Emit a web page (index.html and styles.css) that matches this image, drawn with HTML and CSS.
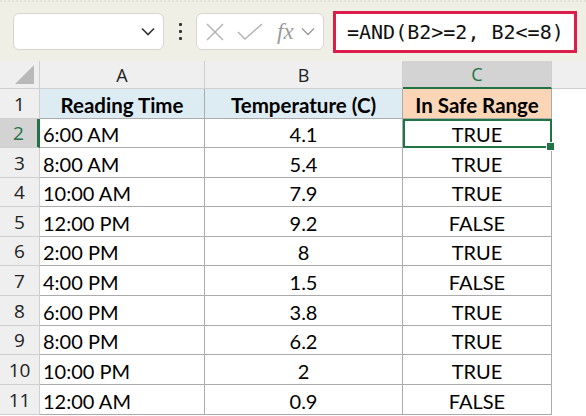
FILE: index.html
```html
<!DOCTYPE html>
<html lang="en">
<head>
	<meta charset="UTF-8">
	<title>AND formula</title>
	<link rel="stylesheet" href="styles.css">
</head>
<body>

	<!-- Formula bar -->
	<div class="toolbar">
		<div class="namebox">
			<svg class="chev" width="14" height="9" viewBox="0 0 14 9"><path d="M1 1.5 L7 7.5 L13 1.5" fill="none" stroke="#333" stroke-width="1.6"/></svg>
		</div>
		<div class="dots"><span></span><span></span><span></span></div>
		<div class="fxbox">
			<svg width="20" height="20" viewBox="0 0 20 20"><path d="M2 2 L18 18 M18 2 L2 18" stroke="#b4b4b4" stroke-width="1.5" fill="none"/></svg>
			<svg width="26" height="20" viewBox="0 0 26 20"><path d="M1 10 L8 17 L25 2" stroke="#b4b4b4" stroke-width="1.5" fill="none"/></svg>
			<span class="fx">fx</span>
			<svg width="14" height="9" viewBox="0 0 14 9"><path d="M1 1.5 L7 7.5 L13 1.5" fill="none" stroke="#9a9a9a" stroke-width="1.4"/></svg>
		</div>
		<div class="formula">=AND(B2&gt;=2, B2&lt;=8)</div>
	</div>

	<!-- Sheet -->
	<div class="sheet">
		<div class="corner"><div class="tri"></div></div>
		<div class="colhead">A</div>
		<div class="colhead">B</div>
		<div class="colhead sel">C</div>
		<div class="colhead rest"></div>

		<div class="rowhead">1</div>
		<div class="cell hdr blue">Reading Time</div>
		<div class="cell hdr blue">Temperature (C)</div>
		<div class="cell hdr peach">In Safe Range</div>
		<div class="blank"></div>

		<div class="rowhead sel">2</div>
		<div class="cell left">6:00 AM</div>
		<div class="cell">4.1</div>
		<div class="cell active">TRUE<span class="handle"></span></div>
		<div class="blank"></div>

		<div class="rowhead">3</div>
		<div class="cell left">8:00 AM</div>
		<div class="cell">5.4</div>
		<div class="cell">TRUE</div>
		<div class="blank"></div>

		<div class="rowhead">4</div>
		<div class="cell left">10:00 AM</div>
		<div class="cell">7.9</div>
		<div class="cell">TRUE</div>
		<div class="blank"></div>

		<div class="rowhead">5</div>
		<div class="cell left">12:00 PM</div>
		<div class="cell">9.2</div>
		<div class="cell">FALSE</div>
		<div class="blank"></div>

		<div class="rowhead">6</div>
		<div class="cell left">2:00 PM</div>
		<div class="cell">8</div>
		<div class="cell">TRUE</div>
		<div class="blank"></div>

		<div class="rowhead">7</div>
		<div class="cell left">4:00 PM</div>
		<div class="cell">1.5</div>
		<div class="cell">FALSE</div>
		<div class="blank"></div>

		<div class="rowhead">8</div>
		<div class="cell left">6:00 PM</div>
		<div class="cell">3.8</div>
		<div class="cell">TRUE</div>
		<div class="blank"></div>

		<div class="rowhead">9</div>
		<div class="cell left">8:00 PM</div>
		<div class="cell">6.2</div>
		<div class="cell">TRUE</div>
		<div class="blank"></div>

		<div class="rowhead">10</div>
		<div class="cell left">10:00 PM</div>
		<div class="cell">2</div>
		<div class="cell">TRUE</div>
		<div class="blank"></div>

		<div class="rowhead">11</div>
		<div class="cell left">12:00 AM</div>
		<div class="cell">0.9</div>
		<div class="cell">FALSE</div>
		<div class="blank"></div>
	</div>

</body>
</html>
```

FILE: styles.css
```css
body {
	margin: 0;
	padding: 0;
	width: 586px;
	height: 416px;
	overflow: hidden;
	background-color: #fff;
	font-family: Lato, "Open Sans", sans-serif;
}

/* Formula bar */
.toolbar {
	height: 61px;
	box-sizing: border-box;
	background-color: #efefe6;
	border-top: 2px dotted #e2e2d8;
	display: flex;
	align-items: center;
	padding: 0 9px 0 13px;
}
.namebox {
	width: 151px;
	height: 37px;
	box-sizing: border-box;
	background-color: #fff;
	border: 1px solid #d6d6d0;
	border-radius: 6px;
	display: flex;
	align-items: center;
	justify-content: flex-end;
	padding-right: 8px;
}
.dots {
	width: 32px;
	display: flex;
	flex-direction: column;
	align-items: center;
	gap: 4px;
}
.dots span {
	width: 3px;
	height: 3px;
	background-color: #333;
	border-radius: 1px;
}
.fxbox {
	width: 128px;
	height: 37px;
	box-sizing: border-box;
	background-color: #fff;
	border: 1px solid #d6d6d0;
	border-radius: 6px;
	display: flex;
	align-items: center;
	gap: 12px;
	padding-left: 8px;
}
.fxbox .fx {
	font-family: "Liberation Serif", serif;
	font-style: italic;
	font-size: 23px;
	color: #9a9a9a;
	margin-left: 2px;
	margin-right: -5px;
}
.formula {
	margin-left: 9px;
	width: 244px;
	height: 42px;
	box-sizing: border-box;
	border: 3px solid #dc1e4b;
	background-color: #fff;
	font-family: "DejaVu Sans Mono", monospace;
	font-size: 20px;
	color: #111;
	display: flex;
	align-items: center;
	padding-left: 11px;
	white-space: pre;
}

/* Sheet grid */
.sheet {
	display: grid;
	grid-template-columns: 40px 165px 198px 149px 34px;
	grid-template-rows: 28px 30px 29px 30px 29px 30px 29px 30px 30px 29px 30px 30px;
	font-size: 20px;
	color: #000;
}
.corner {
	background-color: #efefef;
	border-right: 1px solid #cfcfcf;
	border-bottom: 1px solid #cfcfcf;
	position: relative;
}
.tri {
	position: absolute;
	right: 5px;
	bottom: 4px;
	width: 0;
	height: 0;
	border-left: 19px solid transparent;
	border-bottom: 19px solid #b9b9b9;
}
.colhead {
	background-color: #efefef;
	border-right: 1px solid #cfcfcf;
	border-bottom: 1px solid #cfcfcf;
	display: flex;
	align-items: center;
	justify-content: center;
	font-family: "Open Sans", sans-serif;
	font-size: 18px;
	color: #222;
}
.colhead.sel {
	background-color: #d3d3d3;
	color: #217346;
	border-bottom: 2px solid #217346;
}
.colhead.rest {
	border-right: none;
}
.rowhead {
	background-color: #efefef;
	border-right: 1px solid #cfcfcf;
	border-bottom: 1px solid #cfcfcf;
	display: flex;
	align-items: center;
	justify-content: center;
	font-family: "Open Sans", sans-serif;
	font-size: 19px;
	color: #222;
}
.rowhead.sel {
	background-color: #d3d3d3;
	color: #217346;
	border-right: 3px solid #217346;
}
.cell {
	border-right: 1px solid #ababab;
	border-bottom: 1px solid #ababab;
	display: flex;
	align-items: center;
	justify-content: center;
	position: relative;
	padding-top: 2px;
	box-sizing: border-box;
}
.cell.left {
	justify-content: flex-start;
	padding-left: 3px;
}
.cell.hdr {
	font-weight: bold;
	font-size: 20.5px;
}
.blue {
	background-color: #ddebf2;
}
.peach {
	background-color: #fbd6b6;
}
.active {
	outline: 2px solid #217346;
	outline-offset: -2px;
}
.handle {
	position: absolute;
	right: -4px;
	bottom: -4px;
	width: 7px;
	height: 7px;
	background-color: #217346;
	border: 1px solid #fff;
	z-index: 2;
}
.blank {
	background-color: #fff;
}
```
